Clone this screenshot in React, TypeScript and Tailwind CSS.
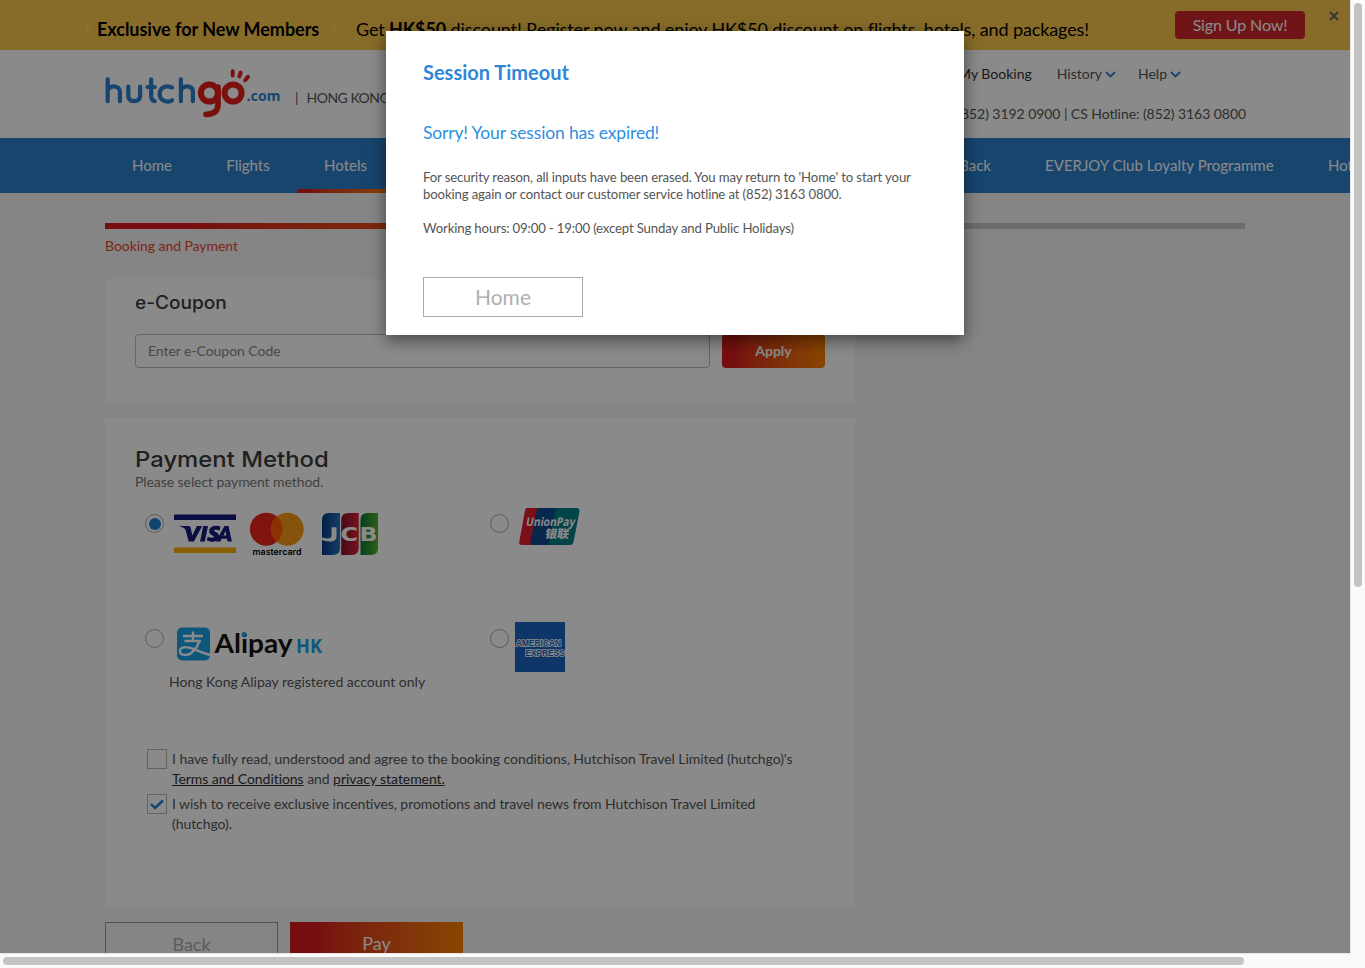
import React from "react";

function Sparkle() {
  return (
    <svg className="h-4 w-4 shrink-0" viewBox="0 0 16 16" fill="#fbdc48" opacity="0.7">
      <path d="M10.5 2 11.7 7 16 8.5 11.7 10 10.5 15 9.3 10 5 8.500 9.300 7Z" />
      <path d="M2 0 2.800 2 4.500 2.700 2.800 3.500 2 5.500 1.300 3.500 0 2.700 1.300 2ZM4 11l.6 1.600 1.700.700-1.700.700L4 16l-.6-2-1.700-.700 1.700-.700Z" />
    </svg>
  );
}

function Chevron() {
  return (
    <svg className="ml-[3px] mt-[2px] h-[7px] w-[11px]" viewBox="0 0 11 7" fill="none" stroke="#2b80cc" strokeWidth="1.8">
      <path d="M1 1l4.500 4.500L10 1" />
    </svg>
  );
}

function Logo() {
  return (
    <svg className="block h-[65px] w-[200px]" viewBox="0 0 200 65" fill="none" strokeLinecap="round" strokeLinejoin="round">
      <g stroke="#2b80cc" strokeWidth="4.2">
        <path d="M12.700 19.300V41.200M12.700 32c0-4 2.500-5.600 6-5.600s6.200 1.800 6.200 5.800v9" />
        <path d="M33.300 26.500v9c0 4 2.400 5.600 5.900 5.600s5.900-1.600 5.900-5.600v-9" />
        <path d="M56.200 19.300v16.200c0 4 1.300 5.400 3.600 5.600M52.500 27h7.300" />
        <path d="M77 27.500c-5.500-3-12.300 0-12.300 6.400s6.800 9.400 12.300 6.400" />
        <path d="M85.900 19.300V41.200M85.900 32c0-4 2.500-5.600 6-5.600s6 1.800 6 5.800v9" />
      </g>
      <g stroke="#e31e1a">
        <circle cx="114.400" cy="33" r="8.500" strokeWidth="6" />
        <path d="M123 27v17.500c0 6.500-3.800 9.800-12 9.900" strokeWidth="5.600" />
        <circle cx="138.100" cy="33" r="8.500" strokeWidth="6" />
        <path d="M137.700 11.200v4.300M145.700 12.500l-1.400 4M153 16.700l-2.900 3.500" strokeWidth="3.900" />
      </g>
      <text x="151.500" y="41.300" textLength="34" lengthAdjust="spacing" fill="#2b80cc" fontFamily="Noto Sans, sans-serif" fontWeight="700" fontSize="14">.com</text>
    </svg>
  );
}

function Radio({ checked = false }: { checked?: boolean }) {
  return (
    <span className="mt-[9px] flex h-[19px] w-[19px] shrink-0 items-center justify-center rounded-full border border-[#aaa]">
      {checked && <span className="h-3 w-3 rounded-full bg-[#1f7fd4]" />}
    </span>
  );
}

function CardBrands() {
  return (
    <svg className="mt-[3px] block h-[50px] w-[210px]" viewBox="0 0 210 50">
      <defs>
        <linearGradient id="jb"><stop stopColor="#063987" /><stop offset="1" stopColor="#2872bb" /></linearGradient>
        <linearGradient id="jr"><stop stopColor="#82142f" /><stop offset="1" stopColor="#df2039" /></linearGradient>
        <linearGradient id="jg"><stop stopColor="#087c35" /><stop offset="1" stopColor="#55ad2e" /></linearGradient>
      </defs>
      <path fill="#151a7b" d="M4 6.500h62V12H4z" />
      <path fill="#f9b000" d="M4 39.500h62V45H4z" />
      <g fill="#151a7b">
        <path d="M10 18h8.400c1.300 0 2 .6 2.300 1.800l1.600 7.700 4.600-9.500h5.200L24 33.500h-5.300l-3.300-12C14.500 19.800 12.500 19 10 18.400Z" />
        <path d="m33.200 18-3.100 15.500h4.700L38 18Z" />
        <path d="m50.500 18.700-.8 3.700c-2.200-1-5.600-1.100-5.700.2-.1 1.300 5.300 1.800 5 5.800-.3 5.400-7.700 6.300-12.200 4.200l.9-3.800c2.500 1.300 6.200 1.500 6.300 0 .1-1.500-5-1.800-4.800-5.900.2-4.800 6.700-6.200 11.300-4.200Z" />
        <path fillRule="evenodd" d="M54.500 18h4l3.400 15.500h-4.300l-.6-2.800h-5.400l-1.100 2.800h-4.700Zm.9 5-2 4.600h3Z" />
      </g>
      <circle cx="96.300" cy="21.200" r="16.500" fill="#eb2318" />
      <circle cx="117.300" cy="21.200" r="16.500" fill="#f79a18" />
      <path fill="#ff5f00" d="M106.800 8.500a16.500 16.500 0 0 1 0 25.400 16.500 16.500 0 0 1 0-25.400Z" />
      <text x="82.500" y="46.500" textLength="49" lengthAdjust="spacingAndGlyphs" fontFamily="Inter, sans-serif" fontWeight="600" fontSize="9">mastercard</text>
      <path fill="url(#jb)" d="M152 12q0-7 7-7h11v35q0 7-7 7h-11Z" />
      <path fill="url(#jr)" d="M171.200 12q0-7 7-7h10.500v35q0 7-7 7h-10.500Z" />
      <path fill="url(#jg)" d="M190.500 12q0-7 7-7H208v35q0 7-7 7h-10.500Z" />
      <g fill="#fff" fontFamily="DejaVu Sans, sans-serif" fontWeight="700" fontSize="19">
        <path d="M161.500 19.300h5v9.200c0 3.500-2 5-6.800 5-3.500 0-6-.8-7.700-1.700v-2.300c5.500 1.500 9.500 1.200 9.500-1.500Z" />
        <text x="170.500" y="33.200" textLength="17.500" lengthAdjust="spacingAndGlyphs">C</text>
        <text x="189.500" y="33.200" textLength="18" lengthAdjust="spacingAndGlyphs">B</text>
      </g>
    </svg>
  );
}

function UnionPay() {
  return (
    <svg className="mt-[2px] block h-[40px] w-[66px]" viewBox="0 0 66 40">
      <path fill="#e21d2b" d="M12 1h16l-8 37H7q-3.500 0-2.700-3.500L10 3.500Q10.500 1 12 1Z" />
      <path fill="#10488e" d="M23 1h22l-7.500 37H18q-3 0-2.500-3.500l6-31Q22 1 23 1Z" />
      <path fill="#058087" d="M43 1h19q3 0 2.500 3.500L58.500 35q-.6 3-3.500 3H36.500q-3 0-2.500-3l6-31Q40.500 1 43 1Z" />
      <text transform="translate(10.500 19) skewX(-10)" textLength="49" lengthAdjust="spacingAndGlyphs" fill="#fff" fontFamily="Open Sans, sans-serif" fontWeight="700" fontSize="12">UnionPay</text>
      <text transform="translate(29.500 30.800) skewX(-10)" textLength="24" lengthAdjust="spacingAndGlyphs" fill="#fff" fontFamily="Noto Sans CJK SC, sans-serif" fontWeight="900" fontSize="11.500">银联</text>
    </svg>
  );
}

function Alipay() {
  return (
    <svg className="mt-[3px] block h-[40px] w-[155px]" viewBox="0 0 155 40">
      <rect x="8" y="4.500" width="33" height="33" rx="5" fill="#1ba1e6" />
      <g fill="none" stroke="#fff" strokeWidth="2.400">
        <path d="M14 13h20M24 8.500v9.500M15.500 18h16.500" />
        <path d="M30.500 18C28 25.500 22 32 16 32c-6 0-7-7-1-7.800 7-.9 13 4.300 26 7.800" />
      </g>
      <text x="45.500" y="29.500" textLength="78" lengthAdjust="spacingAndGlyphs" fill="#181412" fontFamily="Lato, sans-serif" fontWeight="700" fontSize="26">Alipay</text>
      <circle cx="75" cy="11.500" r="2.500" fill="#1ba1e6" />
      <text x="127" y="29.500" textLength="26" lengthAdjust="spacingAndGlyphs" fill="#1ba1e6" fontFamily="Open Sans, sans-serif" fontWeight="700" fontSize="19.500">HK</text>
    </svg>
  );
}

function Amex() {
  return (
    <svg className="mt-[2px] block h-[50px] w-[50px]" viewBox="0 0 50 50" fontFamily="Liberation Sans, sans-serif" fontWeight="700" fontSize="8.500">
      <rect width="50" height="50" fill="#1d64c0" />
      <g fill="#1d64c0" stroke="#fff" strokeWidth="1.700" paintOrder="stroke">
        <text x="1" y="23.700" textLength="45" lengthAdjust="spacingAndGlyphs">AMERICAN</text>
        <text x="10.500" y="34" textLength="39" lengthAdjust="spacingAndGlyphs">EXPRESS</text>
      </g>
    </svg>
  );
}

function CheckBox({ checked = false }: { checked?: boolean }) {
  return (
    <span className="mr-[5px] flex h-5 w-5 shrink-0 items-center justify-center border border-[#b8b8b8]">
      {checked && (
        <svg className="h-[11px] w-[14px]" viewBox="0 0 14 11" fill="none" stroke="#1f7fd4" strokeWidth="2.400">
          <path d="m1 5 4 4L13 1.500" />
        </svg>
      )}
    </span>
  );
}

function Page() {
  return (
    <div className="h-[953px] w-[1350px] overflow-hidden bg-[#f5f5f5]">
      <div className="flex h-[50px] bg-[#fac84c] text-black">
        <div className="flex h-[58px] w-[1175px] shrink-0 items-center whitespace-nowrap pl-[77px] text-[18px]">
          <Sparkle />
          <b className="ml-1 w-[222px] tracking-[-0.03px]">Exclusive for New Members</b>
          <span className="ml-[5px] flex"><Sparkle /></span>
          <span className="ml-4 tracking-[-0.11px]">Get <b>HK$50</b> discount! Register now and enjoy HK$50 discount on flights, hotels, and packages!</span>
        </div>
        <div className="mt-[11px] flex h-[28px] w-[130px] items-center justify-center rounded-[4px] bg-[#d0282b] text-[16px] tracking-[-0.12px] text-white">Sign Up Now!</div>
        <svg className="ml-[24px] mt-[11px] h-[10px] w-[10px]" viewBox="0 0 10 10" stroke="#666" strokeWidth="2"><path d="m1 1 8 8m0-8L1 9" /></svg>
      </div>
      <header className="flex h-[88px] bg-white pl-[95px] pr-[104px] text-[14px] text-[#555]">
        <div className="pt-[10px]"><Logo /></div>
        <div className="whitespace-nowrap pt-[38px] leading-5"><span>|</span><span className="ml-2 tracking-[-0.5px]">HONG KONG</span></div>
        <div className="ml-auto">
          <div className="flex h-[46px] items-center justify-end pr-[65px] pt-[1px]">
            <span className="text-[#333]">My Booking</span>
            <span className="ml-[25px] flex items-center">History<Chevron /></span>
            <span className="ml-[22px] flex items-center">Help<Chevron /></span>
          </div>
          <div className="pt-[2px] leading-[32px] tracking-[-0.06px]">Hotline: (852) 3192 0900 | CS Hotline: (852) 3163 0800</div>
        </div>
      </header>
      <nav className="flex h-[55px] whitespace-nowrap bg-[#2b80cc] pl-[105px] text-[15px] leading-[55px] text-white">
        <div className="flex w-[913px] shrink-0">
          <span className="w-[94px] text-center">Home</span>
          <span className="w-[98px] text-center">Flights</span>
          <span className="flex w-[97px] flex-col text-center"><span className="h-[51px]">Hotels</span><span className="h-1 bg-gradient-to-r from-[#da1a1c] from-10% to-[#fa8000]" /></span>
          <span className="ml-auto pr-[27px]">Cash Back</span>
        </div>
        <span className="w-[283px] shrink-0 pl-[27px] tracking-[0.03px]">EVERJOY Club Loyalty Programme</span>
        <span className="pl-[27px]">Hotel Deals</span>
      </nav>
      <main className="ml-[105px] w-[1140px] pt-[30px]">
        <div className="flex h-[6px] bg-[#c8c8c8]"><div className="w-1/2 bg-gradient-to-r from-[#da1a1c] from-15% to-[#fa8000]" /></div>
        <div className="h-[50px] pt-[7px] text-[14px] leading-5 tracking-[-0.06px] text-[#e8452c]">Booking and Payment</div>
        <section className="h-[124px] w-[750px] bg-white px-[30px] pt-[11px]">
          <h2 className="h-[44px] origin-left scale-x-[1.06] font-['Inter',sans-serif] text-[18px] font-medium leading-[25px] text-[#3a3a3a]">e-Coupon</h2>
          <div className="flex gap-3">
            <div className="h-[34px] w-[575px] rounded-[4px] border border-[#bbb] pl-3 text-[14px] leading-[32px] tracking-[-0.05px] text-[#888]">Enter e-Coupon Code</div>
            <div className="h-[34px] w-[103px] rounded-[4px] bg-gradient-to-r from-[#da1a1c] from-10% to-[#fa8000] text-center text-[14px] font-bold leading-[34px] text-white">Apply</div>
          </div>
        </section>
        <section className="mt-[15px] h-[489px] w-[750px] bg-white px-[30px] pt-[26px] text-[14px]">
          <h2 className="origin-left scale-x-[1.085] font-['Inter',sans-serif] text-[22px] font-medium leading-[30px] text-[#3a3a3a]">Payment Method</h2>
          <p className="leading-4 tracking-[-0.07px] text-[#777]">Please select payment method.</p>
          <div className="mt-[15px] grid h-[230px] grid-cols-[345px_1fr] grid-rows-[115px_115px] pl-[10px]">
            <div className="flex gap-[6px]"><Radio checked /><CardBrands /></div>
            <div className="flex gap-[6px]"><Radio /><UnionPay /></div>
            <div className="flex flex-col">
              <div className="flex gap-[5px]"><Radio /><Alipay /></div>
              <p className="pl-[24px] pt-[9px] leading-5 tracking-[-0.01px] text-[#555]">Hong Kong Alipay registered account only</p>
            </div>
            <div className="flex gap-[6px]"><Radio /><Amex /></div>
          </div>
          <div className="mt-[14px] pl-3 leading-5 tracking-[-0.058px] text-[#555]">
            <div className="flex whitespace-nowrap"><CheckBox /><p>I have fully read, understood and agree to the booking conditions, Hutchison Travel Limited (hutchgo)'s<br /><u className="text-[#333]">Terms and Conditions</u> and <u className="text-[#333]">privacy statement.</u></p></div>
            <div className="mt-[5px] flex"><CheckBox checked /><p>I wish to receive exclusive incentives, promotions and travel news from Hutchison Travel Limited<br />(hutchgo).</p></div>
          </div>
        </section>
        <div className="mt-[15px] flex gap-3 text-center text-[18px]">
          <div className="h-[46px] w-[173px] border border-[#999] leading-[42px] text-[#aaa]">Back</div>
          <div className="h-[46px] w-[173px] bg-gradient-to-r from-[#da1a1c] from-15% to-[#fa8000] leading-[42px] text-white">Pay</div>
        </div>
      </main>
    </div>
  );
}

export default function App() {
  return (
    <div className="relative grid h-[968px] w-[1365px] grid-cols-[1350px_15px] grid-rows-[953px_15px] overflow-hidden bg-[#fafafa] font-['Lato',sans-serif]">
      <Page />
      <div className="border-l border-[#e6e6e6] pl-[3px] pt-[3px]"><div className="h-[584px] w-2 rounded-full bg-[#c4c4c4]" /></div>
      <div className="border-t border-[#e6e6e6] pl-[3px] pt-[3px]"><div className="h-2 w-[1241px] rounded-full bg-[#c4c4c4]" /></div>
      <div />
      <div className="absolute left-0 top-0 h-[953px] w-[1350px] overflow-hidden bg-black/46 pl-[386px] pt-[31px]">
        <div className="h-[304px] w-[578px] bg-white pl-[37px] pt-[29px] text-[#555] shadow-[0_5px_15px_rgba(0,0,0,0.5)]">
          <h1 className="text-[20px] font-bold leading-6 text-[#2e87d7]">Session Timeout</h1>
          <p className="mt-[37px] text-[17.500px] leading-6 tracking-[-0.16px] text-[#2e8fe0]">Sorry! Your session has expired!</p>
          <p className="mt-[24px] whitespace-nowrap text-[13.200px] leading-[17px] tracking-[-0.14px]">For security reason, all inputs have been erased. You may return to 'Home' to start your<br />booking again or contact our customer service hotline at (852) 3163 0800.</p>
          <p className="mt-[17px] text-[13.200px] leading-[17px] tracking-[-0.16px]">Working hours: 09:00 - 19:00 (except Sunday and Public Holidays)</p>
          <div className="mt-[40px] h-[40px] w-[160px] border border-[#aaa] text-center text-[21px] leading-[38px] text-[#b0b0b0]">Home</div>
        </div>
      </div>
    </div>
  );
}
